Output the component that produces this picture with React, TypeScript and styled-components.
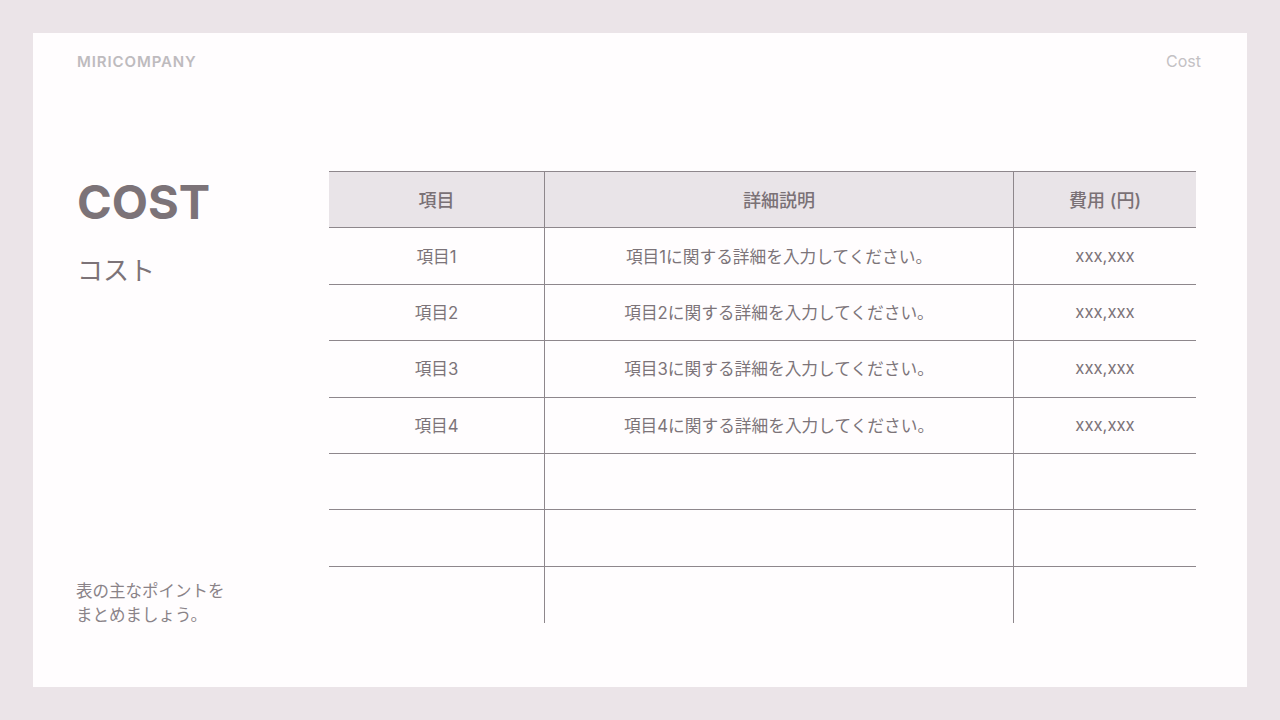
import React from 'react';
import styled, { createGlobalStyle } from 'styled-components';

const GlobalStyle = createGlobalStyle`
  html, body {
    margin: 0;
    padding: 0;
    background: #ebe4e8;
  }
  body {
    font-family: "Inter", "Noto Sans CJK JP", sans-serif;
  }
`;

const Page = styled.div`
  width: 1280px;
  height: 720px;
  padding: 33px;
  box-sizing: border-box;
  background: #ebe4e8;
`;

const Card = styled.div`
  height: 100%;
  background: #fffdfe;
  display: flex;
  flex-direction: column;
  box-sizing: border-box;
  padding: 19px 46px 0 44px;
`;

const TopBar = styled.header`
  display: flex;
  justify-content: space-between;
  align-items: center;
  height: 18px;
`;

const Brand = styled.div`
  font-family: "Inter", sans-serif;
  font-weight: 600;
  font-size: 15px;
  letter-spacing: 0.9px;
  color: #bebbbe;
`;

const PageName = styled.div`
  font-family: "Inter", sans-serif;
  font-size: 16px;
  color: #c4c1c4;
`;

const Main = styled.main`
  display: grid;
  grid-template-columns: 252px 1fr;
  margin-top: 101px;
  padding-right: 5px;
  height: 455px;
`;

const Side = styled.div`
  display: flex;
  flex-direction: column;
  justify-content: space-between;
`;

const Title = styled.h1`
  margin: 2px 0 0;
  font-family: "Inter", sans-serif;
  font-weight: 700;
  font-size: 47px;
  line-height: 57px;
  color: #7c7378;
`;

const SubTitle = styled.h2`
  margin: 22px 0 0;
  font-family: "Noto Sans CJK JP", sans-serif;
  font-weight: 400;
  font-size: 26px;
  line-height: 34px;
  color: #7c7378;
`;

const Note = styled.p`
  margin: 0;
  margin-left: -1px;
  font-family: "Noto Sans CJK JP", sans-serif;
  font-size: 16.5px;
  line-height: 24px;
  color: #8a8388;
`;

const Table = styled.div`
  display: grid;
  grid-template-columns: 215px 469px 1fr;
  grid-auto-rows: 56.4px;
  border-top: 1px solid #8e878c;
  align-self: start;
`;

const Cell = styled.div<{ $head?: boolean; $last?: boolean; $col: number }>`
  display: flex;
  align-items: center;
  justify-content: center;
  box-sizing: border-box;
  border-bottom: ${({ $last }) => ($last ? 'none' : '1px solid #8e878c')};
  border-left: ${({ $col }) => ($col === 0 ? 'none' : '1px solid #8e878c')};
  background: ${({ $head }) => ($head ? '#e9e4e8' : 'transparent')};
  font-family: "Inter", "Noto Sans CJK JP", sans-serif;
  font-size: ${({ $head }) => ($head ? '18px' : '16.7px')};
  font-weight: ${({ $head }) => ($head ? 500 : 400)};
  color: ${({ $head }) => ($head ? '#7a7176' : '#7c7479')};
  padding-bottom: 1px;
`;

const headers = ['項目', '詳細説明', '費用 (円)'];

const rows: string[][] = [
  ['項目1', '項目1に関する詳細を入力してください。', 'xxx,xxx'],
  ['項目2', '項目2に関する詳細を入力してください。', 'xxx,xxx'],
  ['項目3', '項目3に関する詳細を入力してください。', 'xxx,xxx'],
  ['項目4', '項目4に関する詳細を入力してください。', 'xxx,xxx'],
  ['', '', ''],
  ['', '', ''],
  ['', '', ''],
];

const App: React.FC = () => {
  return (
    <>
      <GlobalStyle />
      <Page>
        <Card>
          <TopBar>
            <Brand>MIRICOMPANY</Brand>
            <PageName>Cost</PageName>
          </TopBar>

          <Main>
            <Side>
              <div>
                <Title>COST</Title>
                <SubTitle>コスト</SubTitle>
              </div>
              <Note>
                表の主なポイントを
                <br />
                まとめましょう。
              </Note>
            </Side>

            <Table>
              {headers.map((h, i) => (
                <Cell key={h} $head $col={i}>
                  {h}
                </Cell>
              ))}
              {rows.map((r, ri) =>
                r.map((c, ci) => (
                  <Cell key={`${ri}-${ci}`} $col={ci} $last={ri === rows.length - 1}>
                    {c}
                  </Cell>
                ))
              )}
            </Table>
          </Main>
        </Card>
      </Page>
    </>
  );
};

export default App;
